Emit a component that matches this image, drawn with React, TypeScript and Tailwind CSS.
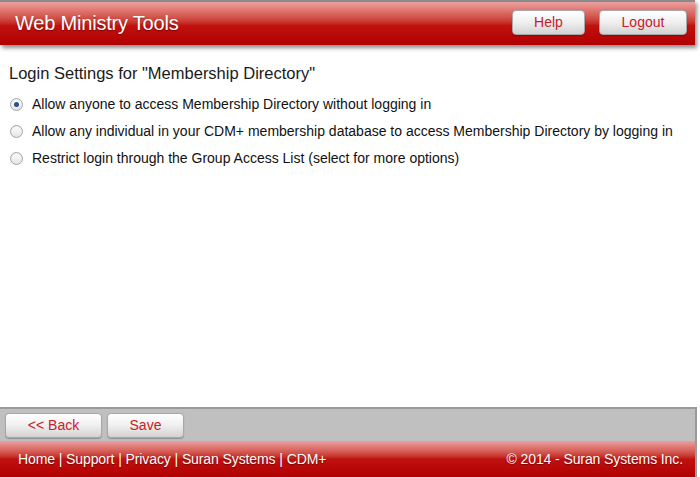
const options = [
  "Allow anyone to access Membership Directory without logging in",
  "Allow any individual in your CDM+ membership database to access Membership Directory by logging in",
  "Restrict login through the Group Access List (select for more options)",
];

const footerLinks = ["Home", "Support", "Privacy", "Suran Systems", "CDM+"];

const Btn = ({ label, className }: { label: string; className: string }) => (
  <button
    className={`h-[25px] rounded-[4px] border border-[#a8a8a8] bg-gradient-to-b from-[#ffffff] via-[#efefef] to-[#d2d2d2] text-[14px] text-[#c8202a] shadow-[0_1px_1px_rgba(0,0,0,0.25)] ${className}`}
  >
    {label}
  </button>
);

const Radio = ({ checked }: { checked: boolean }) => (
  <span className="flex h-[13px] w-[13px] items-center justify-center rounded-full border border-[#a6a6a6] bg-gradient-to-b from-[#ffffff] to-[#e4e4e4] shadow-[inset_0_1px_1px_rgba(0,0,0,0.08)]">
    {checked && <span className="h-[5px] w-[5px] rounded-full bg-[#2b4f8c]" />}
  </span>
);

export default function App() {
  return (
    <div className="flex h-[477px] w-[700px] flex-col bg-white font-['Liberation_Sans',Arial,sans-serif]">
      <header className="relative z-10 mr-[5px] flex h-[45px] items-center justify-between border-t-2 border-[#8a8a8a] bg-gradient-to-b from-[#eba0a0] via-[#c01010] via-55% to-[#b00000] pb-[2px] pl-[15px] pr-[8px] shadow-[2px_3px_4px_rgba(0,0,0,0.45)]">
        <h1 className="text-[20px] tracking-[-0.2px] text-white [text-shadow:0_1px_1px_rgba(0,0,0,0.35)]">
          Web Ministry Tools
        </h1>
        <div className="flex gap-[14px]">
          <Btn label="Help" className="w-[73px]" />
          <Btn label="Logout" className="w-[88px]" />
        </div>
      </header>

      <main className="flex-1 px-[9px] pt-[18px]">
        <h2 className="text-[16.5px] leading-[20px] text-[#1a1a1a]">Login Settings for "Membership Directory"</h2>
        <div className="mt-[12px] flex flex-col gap-[9px] pl-[1px]">
          {options.map((o, i) => (
            <label key={o} className="flex h-[18px] items-center gap-[9px] text-[14px] leading-[18px] text-[#111]">
              <Radio checked={i === 0} />
              <span>{o}</span>
            </label>
          ))}
        </div>
      </main>

      <div className="mr-[3px] flex h-[34px] items-center gap-[5px] border-t-2 border-r-2 border-[#9a9a9a] bg-[#c0c0c0] px-[5px] pt-[1px]">
        <Btn label="<< Back" className="w-[97px]" />
        <Btn label="Save" className="w-[77px]" />
      </div>
      <footer className="mr-[3px] flex h-[36px] items-center justify-between border-r-2 border-[#9a9a9a] bg-gradient-to-b from-[#eba0a0] via-[#c01010] via-50% to-[#b00000] pl-[18px] pr-[12px] text-[14px] tracking-[-0.1px] text-white [text-shadow:0_1px_1px_rgba(0,0,0,0.4)]">
        <div>
          {footerLinks.map((l, i) => (
            <span key={l}>
              {i > 0 && " | "}
              {l}
            </span>
          ))}
        </div>
        <div>© 2014 - Suran Systems Inc.</div>
      </footer>
    </div>
  );
}
